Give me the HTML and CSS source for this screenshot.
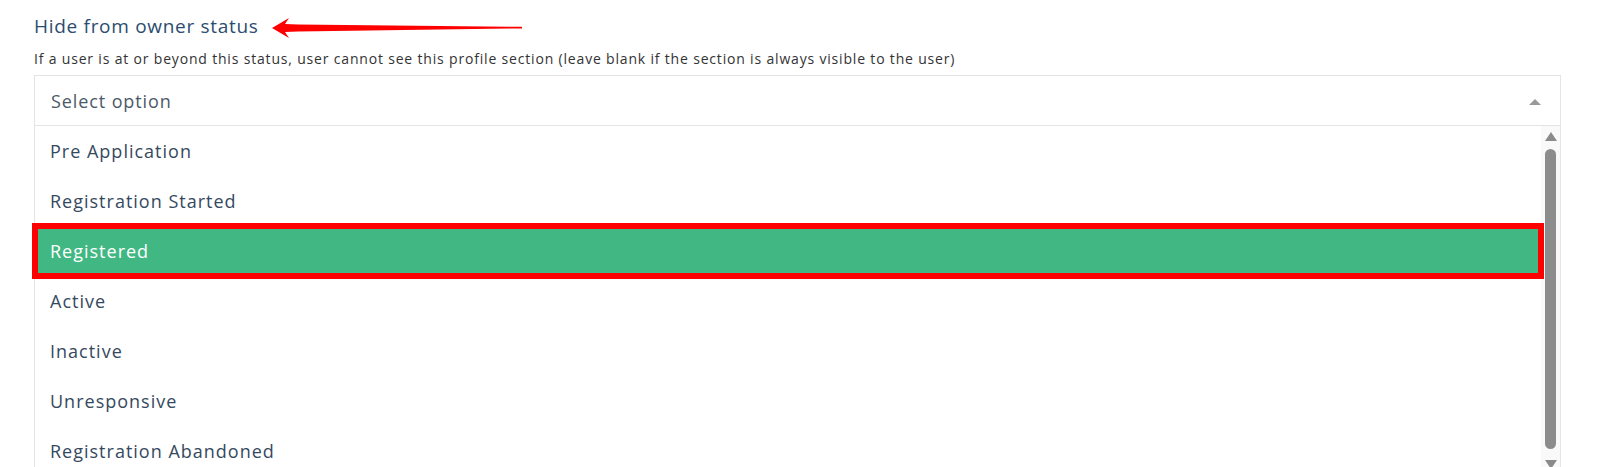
FILE: index.html
```html
<!DOCTYPE html>
<html lang="en">
<head>
<meta charset="utf-8">
<title>Hide from owner status</title>
<link rel="stylesheet" href="styles.css">
</head>
<body>
<div class="field">
  <div class="label-row">
    <h3 class="label">Hide from owner status</h3>
    <svg class="arrow" width="254" height="24" viewBox="0 0 254 24">
      <polygon points="0,12 17,2 13,8 26,8.5 250,10.8 250,12.4 26,15.5 13,16 17,22" fill="#ff0000"/>
    </svg>
  </div>
  <p class="hint">If a user is at or beyond this status, user cannot see this profile section (leave blank if the section is always visible to the user)</p>
  <div class="select">
    <div class="select-head">
      <span class="placeholder">Select option</span>
      <span class="caret"></span>
    </div>
    <div class="select-body">
      <ul class="options">
        <li class="option">Pre Application</li>
        <li class="option">Registration Started</li>
        <li class="option option-active">Registered</li>
        <li class="option">Active</li>
        <li class="option">Inactive</li>
        <li class="option">Unresponsive</li>
        <li class="option">Registration Abandoned</li>
      </ul>
      <div class="scrollbar">
        <span class="sb-up"></span>
        <span class="sb-thumb"></span>
        <span class="sb-down"></span>
      </div>
    </div>
  </div>
</div>
</body>
</html>
```

FILE: styles.css
```css
html, body {
  margin: 0;
  padding: 0;
  background: #ffffff;
  overflow: hidden;
}

body {
  font-family: "Open Sans", "Noto Sans", sans-serif;
  color: #35495e;
}

.field {
  padding: 14px 0 0 34px;
  width: 1527px;
}

.label-row {
  display: flex;
  align-items: center;
  height: 24px;
}

.label {
  margin: 0;
  font-size: 19px;
  font-weight: 500;
  letter-spacing: 0.7px;
  line-height: 24px;
  color: #2b4d70;
}

.arrow {
  margin-left: 13px;
  margin-top: 3px;
  flex: none;
}

.hint {
  margin: 11px 0 0 0;
  font-size: 14px;
  letter-spacing: 0.82px;
  line-height: 20px;
  color: #333333;
  white-space: nowrap;
}

.select {
  margin-top: 6px;
  border: 1px solid #e4e4e4;
  background: #ffffff;
}

.select-head {
  height: 49px;
  display: flex;
  align-items: center;
  justify-content: space-between;
  padding: 0 19px 0 16px;
  border-bottom: 1px solid #e4e4e4;
}

.placeholder {
  font-size: 18px;
  letter-spacing: 0.9px;
  color: #4b5968;
}

.caret {
  width: 0;
  height: 0;
  border-left: 6px solid transparent;
  border-right: 6px solid transparent;
  border-bottom: 6px solid #999999;
  margin-top: 2px;
}

.select-body {
  display: flex;
}

.options {
  list-style: none;
  margin: 0;
  padding: 0;
  flex: 1;
}

.option {
  height: 50px;
  display: flex;
  align-items: center;
  padding-left: 15px;
  font-size: 18px;
  letter-spacing: 1px;
  color: #35495e;
}

.option-active {
  background: #41b883;
  color: #ffffff;
  outline: 6px solid #ff0000;
  outline-offset: -3px;
  position: relative;
}

.scrollbar {
  width: 19px;
  flex: none;
  background: #f9f9f9;
  display: flex;
  flex-direction: column;
  align-items: center;
  height: 345px;
}

.sb-up, .sb-down {
  width: 0;
  height: 0;
  border-left: 6px solid transparent;
  border-right: 6px solid transparent;
}

.sb-up {
  margin-top: 6px;
  border-bottom: 9px solid #8a8a8a;
}

.sb-thumb {
  margin-top: 8px;
  width: 11px;
  height: 300px;
  border-radius: 6px;
  background: #8c8c8c;
}

.sb-down {
  margin-top: 11px;
  border-top: 9px solid #8a8a8a;
}
```
